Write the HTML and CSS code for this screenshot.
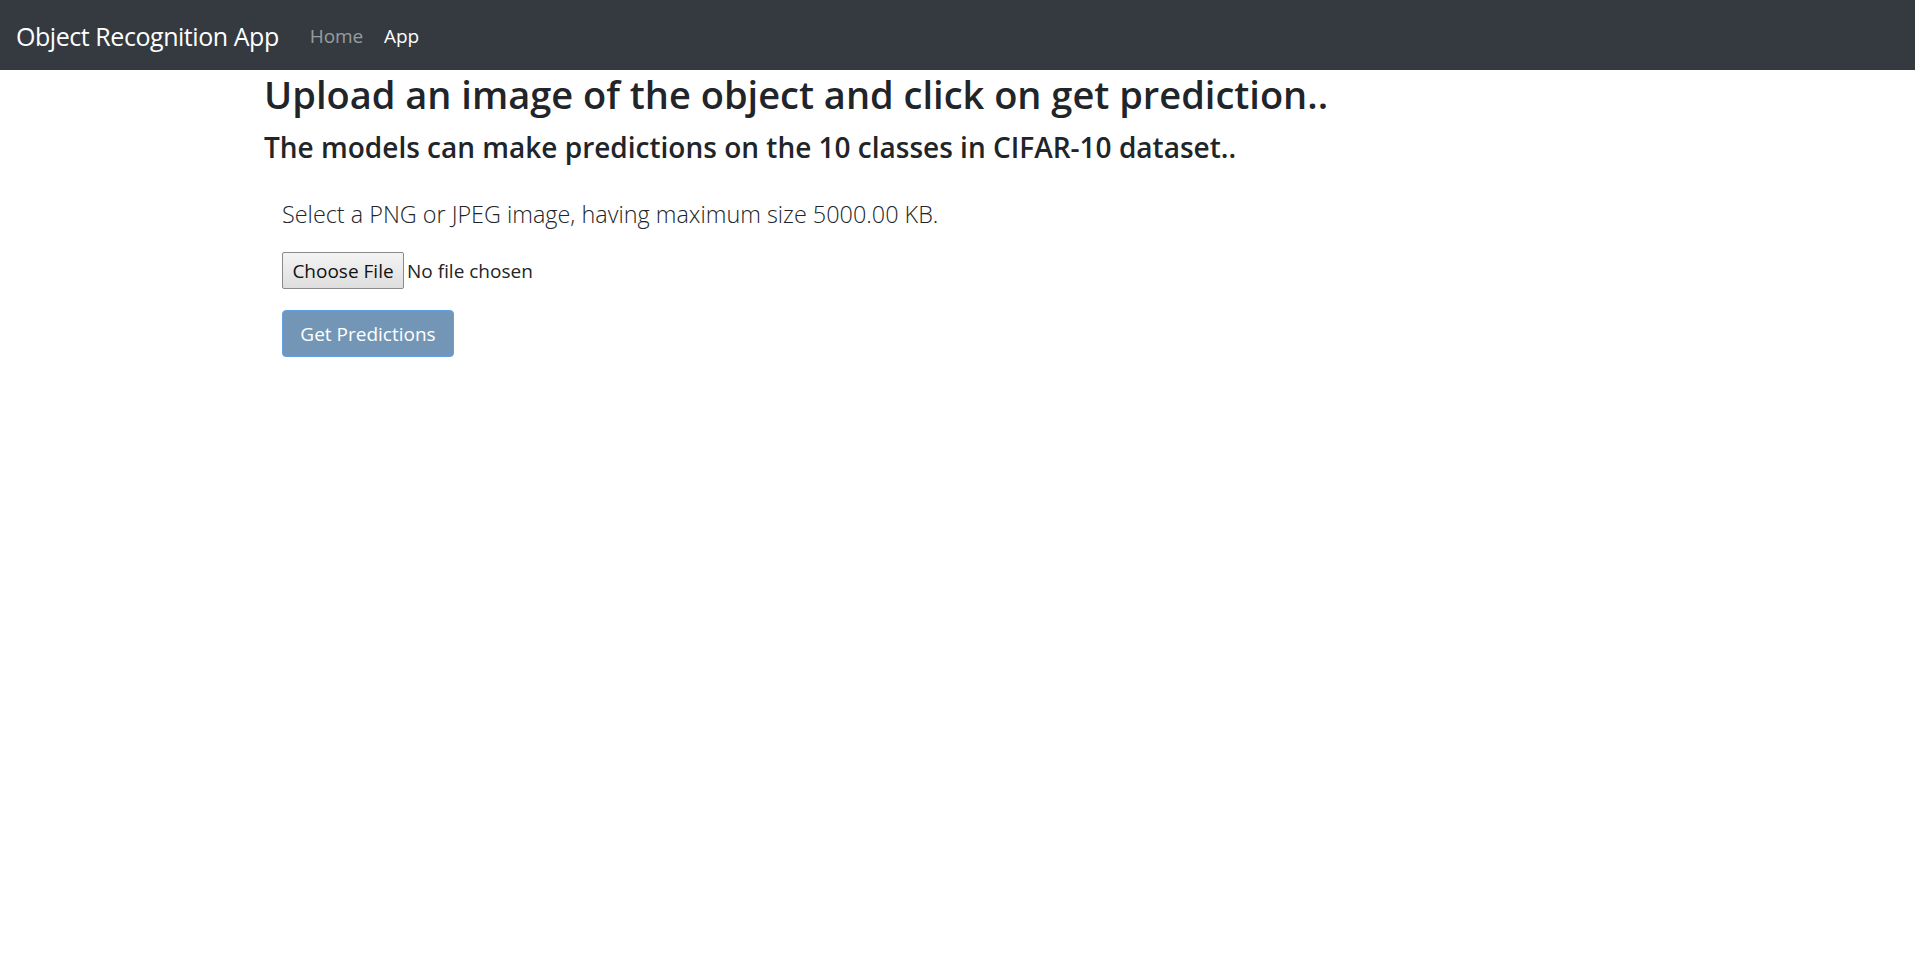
FILE: index.html
```html
<!DOCTYPE html>
<html lang="en">
<head>
<meta charset="utf-8">
<title>Object Recognition App</title>
<link rel="stylesheet" href="styles.css">
</head>
<body>
<nav class="navbar">
  <a class="brand" href="#">Object Recognition App</a>
  <div class="nav-links">
    <a class="nav-link" href="#">Home</a>
    <a class="nav-link active" href="#">App</a>
  </div>
</nav>
<main class="container">
  <h1 class="title">Upload an image of the object and click on get prediction..</h1>
  <h2 class="subtitle">The models can make predictions on the 10 classes in CIFAR-10 dataset..</h2>
  <form class="upload-form">
    <p class="lead">Select a PNG or JPEG image, having maximum size 5000.00 KB.</p>
    <div class="file-row">
      <span class="file-btn">Choose File</span>
      <span class="file-name">No file chosen</span>
    </div>
    <button type="button" class="btn-primary">Get Predictions</button>
  </form>
</main>
</body>
</html>
```
FILE: styles.css
```css
* { box-sizing: border-box; }
html, body { margin: 0; padding: 0; }
body {
  font-family: "Open Sans", "Noto Sans", sans-serif;
  color: #212529;
  background: #fff;
}
.navbar {
  height: 70px;
  background: #343a40;
  display: flex;
  align-items: flex-start;
  padding: 19px 16px 0;
}
.brand {
  color: #fff;
  text-decoration: none;
  font-size: 25px;
  line-height: 34px;
  letter-spacing: -0.45px;
  margin-right: 31px;
}
.nav-links {
  display: flex;
  gap: 21px;
  margin-top: 4px;
}
.nav-link {
  color: rgba(255,255,255,0.5);
  text-decoration: none;
  font-size: 19px;
  line-height: 26px;
  letter-spacing: -0.1px;
}
.nav-link.active { color: #fff; }
.container {
  max-width: 1425px;
  margin: 0 auto;
  padding: 0 19px;
}
.title {
  font-size: 38px;
  font-weight: 600;
  line-height: 44px;
  margin: 2px 0 0;
}
.subtitle {
  font-size: 28px;
  font-weight: 600;
  line-height: 34px;
  margin: 14px 0 0;
}
.upload-form { padding: 0 18px; }
.lead {
  font-size: 23.4px;
  font-weight: 300;
  color: #212529;
  line-height: 30px;
  margin: 35px 0 0;
}
.file-row {
  display: flex;
  align-items: center;
  margin-top: 23px;
  height: 37px;
}
.file-btn {
  display: inline-flex;
  align-items: center;
  justify-content: center;
  width: 122px;
  height: 37px;
  padding: 1px 0 0;
  border: 1px solid #8a8a8a;
  border-radius: 2px;
  background: linear-gradient(#f4f4f4, #dedede);
  font-size: 19px;
  color: #111;
}
.file-name {
  font-size: 19px;
  margin-left: 3px;
  color: #212529;
}
.btn-primary {
  display: block;
  margin-top: 21px;
  width: 172px;
  height: 47px;
  background: #7396b6;
  border: 1px solid #64a0e8;
  border-radius: 4px;
  color: #fff;
  font-family: inherit;
  font-size: 19px;
  padding: 0;
}
```
